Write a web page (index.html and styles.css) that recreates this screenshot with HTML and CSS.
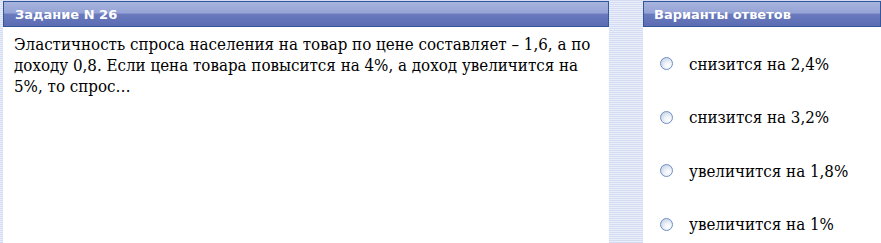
FILE: index.html
```html
<!DOCTYPE html>
<html lang="ru">

<head>
    <meta charset="UTF-8">
    <title>Задание N 26</title>
    <link rel="stylesheet" href="styles.css">
</head>

<body>
    <div class="test">
        <section class="vopros">
            <h2 class="shapka">Задание N 26</h2>
            <p class="tekst">Эластичность спроса населения на товар по цене составляет – 1,6, а по доходу 0,8. Если цена товара повысится на 4%, а доход увеличится на 5%, то спрос…</p>
        </section>

        <section class="otvety">
            <h2 class="shapka">Варианты ответов</h2>
            <ul>
                <li><span class="radio"></span>снизится на 2,4%</li>
                <li><span class="radio"></span>снизится на 3,2%</li>
                <li><span class="radio"></span>увеличится на 1,8%</li>
                <li><span class="radio"></span>увеличится на 1%</li>
            </ul>
        </section>
    </div>
</body>

</html>
```

FILE: styles.css
```css
* {
    margin: 0;
    padding: 0;
    list-style-type: none;
    box-sizing: border-box;
}

body {
    height: 243px;
    overflow: hidden;
    background: repeating-linear-gradient(#d3dcf2 0 1px, #e9eef9 1px 2px);
}

.test {
    display: flex;
    height: 100%;
    padding: 1px 0 0 3px;
    gap: 34px;
}

.vopros,
.otvety {
    background: white;
}

.vopros {
    width: 606px;
}

.otvety {
    flex: 1;
}

.shapka {
    height: 26px;
    padding: 5px 0 0 11px;
    border: 1px solid #33579a;
    background: linear-gradient(#a8b5de 0, #95a3d6 45%, #6a7abd 52%, #5c6cb3 100%);
    color: white;
    font-family: "DejaVu Sans", Verdana, sans-serif;
    font-size: 13px;
    font-weight: bold;
    line-height: 15px;
}

.otvety .shapka {
    padding-left: 10px;
}

.tekst {
    padding: 7px 14px 0 11px;
    font-family: "DejaVu Serif", serif;
    font-stretch: condensed;
    font-size: 16.8px;
    line-height: 21px;
    color: black;
}

ul {
    padding: 10px 0 0 17px;
}

li {
    display: flex;
    align-items: center;
    height: 53.5px;
    font-family: "DejaVu Serif", serif;
    font-stretch: condensed;
    font-size: 16.8px;
    color: black;
}

.radio {
    width: 13px;
    height: 13px;
    margin-right: 16px;
    border: 1px solid #6f8fc4;
    border-radius: 50%;
    background: radial-gradient(circle at 65% 70%, #ffffff 0, #eef2f8 35%, #c9d4e6 80%);
}
```
